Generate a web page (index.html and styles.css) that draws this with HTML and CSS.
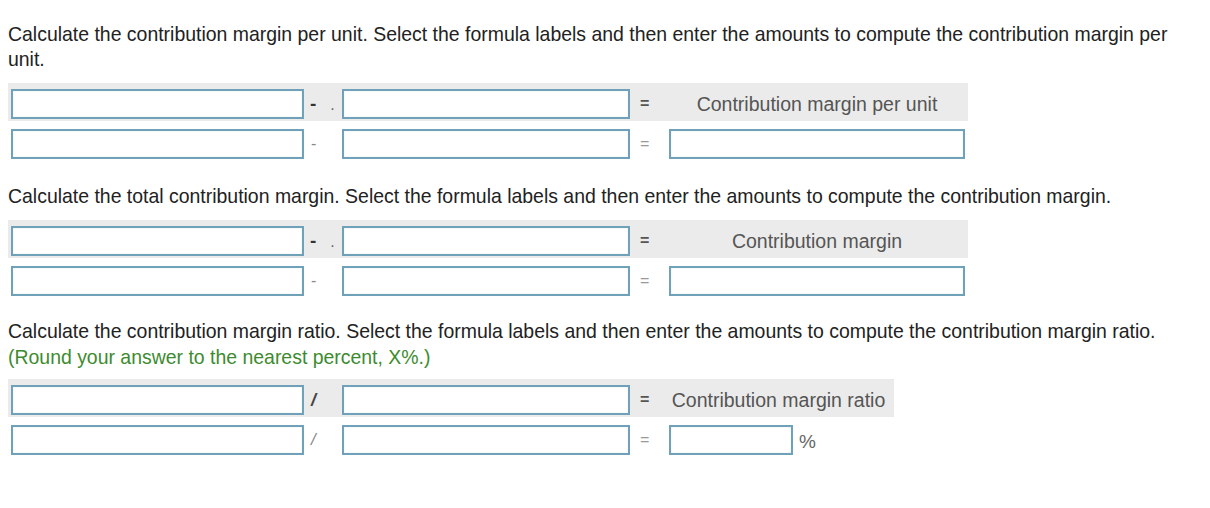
FILE: index.html
```html
<!DOCTYPE html>
<html>
<head>
<meta charset="utf-8">
<link rel="stylesheet" href="styles.css">
</head>
<body>
<div class="page">
  <p class="prompt first">Calculate the contribution margin per unit. Select the formula labels and then enter the amounts to compute the contribution margin per unit.</p>
  <div class="formula f-wide">
    <div class="row head">
      <span class="box"></span>
      <span class="op op-dark">-<i class="dot">.</i></span>
      <span class="box"></span>
      <span class="op eq-dark">=</span>
      <span class="label">Contribution margin per unit</span>
    </div>
    <div class="row body">
      <span class="box"></span>
      <span class="op op-light">-</span>
      <span class="box"></span>
      <span class="op eq-light">=</span>
      <span class="box"></span>
    </div>
  </div>

  <p class="prompt second">Calculate the total contribution margin. Select the formula labels and then enter the amounts to compute the contribution margin.</p>
  <div class="formula f-wide">
    <div class="row head">
      <span class="box"></span>
      <span class="op op-dark">-<i class="dot">.</i></span>
      <span class="box"></span>
      <span class="op eq-dark">=</span>
      <span class="label">Contribution margin</span>
    </div>
    <div class="row body">
      <span class="box"></span>
      <span class="op op-light">-</span>
      <span class="box"></span>
      <span class="op eq-light">=</span>
      <span class="box"></span>
    </div>
  </div>

  <p class="prompt third">Calculate the contribution margin ratio. Select the formula labels and then enter the amounts to compute the contribution margin ratio.<br><span class="hint">(Round your answer to the nearest percent, X%.)</span></p>
  <div class="formula f-narrow">
    <div class="row head">
      <span class="box"></span>
      <span class="op slash-dark">/</span>
      <span class="box"></span>
      <span class="op eq-dark">=</span>
      <span class="label">Contribution margin ratio</span>
    </div>
    <div class="row body">
      <span class="box"></span>
      <span class="op slash-light">/</span>
      <span class="box"></span>
      <span class="op eq-light">=</span>
      <span class="pct"><span class="box small"></span><span class="unit">%</span></span>
    </div>
  </div>
</div>
</body>
</html>
```

FILE: styles.css
```css
html, body {
  margin: 0;
  padding: 0;
  background: #ffffff;
}

body {
  font-family: "Liberation Sans", Arial, Helvetica, sans-serif;
  color: #222222;
}

.page {
  padding: 22px 8px 0 8px;
}

.prompt {
  margin: 23px 0 12px 0;
  font-size: 19.45px;
  line-height: 25px;
  max-width: 1180px;
}

.prompt.first {
  margin-top: 0;
  margin-bottom: 11px;
}

.prompt.second {
  margin-top: 25px;
  margin-bottom: 11px;
}

.prompt.third {
  line-height: 26px;
  margin-top: 22px;
  margin-bottom: 9px;
}

.hint {
  color: #3d8b2f;
}

.formula {
  display: block;
}

.row {
  display: grid;
  align-items: center;
}

.f-wide .row {
  grid-template-columns: 293px 38px 288px 39px 296px;
  width: 954px;
}

.f-narrow .row {
  grid-template-columns: 293px 38px 288px 39px 219px;
  width: 877px;
}

.head {
  background: #ebebeb;
  padding: 5px 3px 3px 3px;
  height: 30px;
}

.f-narrow .head {
  padding-right: 6px;
}

.body {
  padding: 8px 3px 0 3px;
  height: 30px;
}

.box {
  display: block;
  box-sizing: border-box;
  height: 30px;
  background: #ffffff;
  border: 2px solid #6fa2b9;
  box-shadow: inset 0 0 1px rgba(60, 110, 140, 0.4);
}

.box.small {
  width: 124px;
}

.op {
  display: block;
  font-size: 16px;
  line-height: 30px;
  padding-left: 6px;
}

.op-dark {
  color: #333333;
  font-weight: bold;
  font-size: 19px;
}

.dot {
  font-style: normal;
  font-weight: normal;
  color: #666666;
  font-size: 16px;
  margin-left: 14px;
}

.op-light {
  color: #888888;
  padding-left: 7px;
}

.eq-dark {
  color: #555555;
  font-weight: bold;
  font-size: 16px;
  padding-left: 10px;
}

.eq-light {
  color: #999999;
  font-size: 16px;
  padding-left: 10px;
}

.slash-dark {
  color: #444444;
  font-weight: bold;
  font-style: italic;
  font-size: 18px;
  padding-left: 7px;
}

.slash-light {
  color: #888888;
  font-style: italic;
  font-size: 17px;
  padding-left: 7px;
}

.label {
  display: block;
  text-align: center;
  color: #555555;
  font-size: 19.5px;
  line-height: 32px;
  white-space: nowrap;
}

.pct {
  display: flex;
  align-items: center;
}

.unit {
  color: #666666;
  font-size: 19px;
  margin-left: 6px;
  padding-top: 3px;
}
```
